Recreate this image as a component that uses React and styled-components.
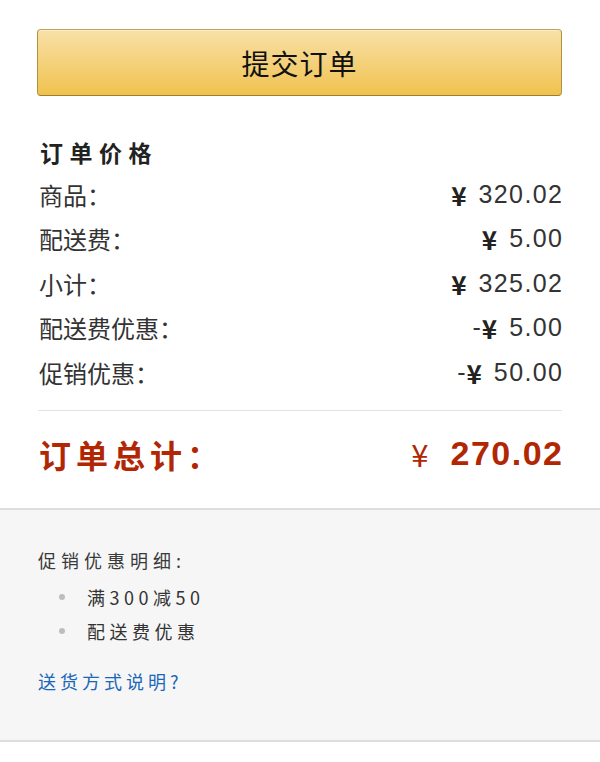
import React from "react";
import styled, { createGlobalStyle } from "styled-components";

const Global = createGlobalStyle`
  html, body { margin: 0; padding: 0; background: #fff; }
  body { width: 600px; font-family: "Noto Sans CJK SC", "Liberation Sans", sans-serif; }
  * { box-sizing: border-box; }
`;

const Page = styled.div`
  width: 600px;
  display: flex;
  flex-direction: column;
`;

const Summary = styled.section`
  padding: 29px 38px 29px 37px;
  display: flex;
  flex-direction: column;
`;

const SubmitButton = styled.button`
  height: 67px;
  width: 100%;
  display: flex;
  align-items: center;
  justify-content: center;
  border: 1px solid;
  border-color: #c2a258 #b0913f #9c7e31;
  border-radius: 4px;
  background: linear-gradient(to bottom, #f8e0a8, #f0c24e);
  box-shadow: inset 0 1px 0 rgba(255, 255, 255, 0.4);
  font-family: "Noto Sans CJK SC", sans-serif;
  font-size: 28px;
  letter-spacing: 1px;
  color: #111;
  padding: 0;
  cursor: pointer;
`;

const Heading = styled.h3`
  margin: 36px 0 0 3px;
  font-size: 23px;
  line-height: 40px;
  font-weight: 700;
  letter-spacing: 6.5px;
  color: #222;
`;

const Row = styled.div`
  display: flex;
  justify-content: space-between;
  align-items: center;
  height: 44.5px;
`;

const Label = styled.span`
  color: ${(p) => (p.$total ? "#b12704" : "#333")};
  font-size: ${(p) => (p.$total ? "32px" : "24px")};
  font-weight: ${(p) => (p.$total ? 700 : 400)};
  letter-spacing: ${(p) => (p.$total ? "5px" : "0")};
  margin-left: 2px;
`;

const Value = styled.span`
  display: flex;
  align-items: center;
  white-space: pre;
`;

const Minus = styled.span`
  font-family: "Liberation Sans", sans-serif;
  font-size: 25px;
  color: #333;
  margin-right: 1px;
`;

const Yen = styled.span`
  font-family: "Noto Sans CJK SC", sans-serif;
  font-size: ${(p) => (p.$total ? "31px" : "26px")};
  font-weight: ${(p) => (p.$total ? 400 : 700)};
  color: ${(p) => (p.$total ? "#b12704" : "#222")};
  margin-right: ${(p) => (p.$total ? "22px" : "12px")};
`;

const Amount = styled.span`
  font-family: "Liberation Sans", Arial, sans-serif;
  font-size: ${(p) => (p.$total ? "34px" : "25px")};
  font-weight: ${(p) => (p.$total ? 700 : 400)};
  letter-spacing: ${(p) => (p.$total ? "1.5px" : "1.4px")};
  margin-right: ${(p) => (p.$total ? "-1.5px" : "-1.4px")};
  color: ${(p) => (p.$total ? "#b12704" : "#333")};
`;

const Divider = styled.hr`
  margin: 15px 0 0 1px;
  border: 0;
  border-top: 1px solid #e3e3e3;
`;

const TotalRow = styled(Row)`
  height: 50px;
  margin-top: 18px;
`;

const Details = styled.section`
  border-top: 2px solid #dddddd;
  border-bottom: 2px solid #dddddd;
  background: #f6f6f6;
  padding: 35px 38px 44px 38px;
  display: flex;
  flex-direction: column;
`;

const DetailTitle = styled.div`
  font-size: 18px;
  line-height: 30px;
  letter-spacing: 5px;
  color: #3a3a3a;
`;

const List = styled.ul`
  margin: 5px 0 0;
  padding: 0;
  list-style: none;
`;

const Item = styled.li`
  display: flex;
  align-items: center;
  height: 34px;
  font-size: 18px;
  letter-spacing: 4.5px;
  color: #333;
  &::before {
    content: "";
    width: 6px;
    height: 6px;
    border-radius: 50%;
    background: #bdbdbd;
    margin: 0 22px 0 21px;
    flex: none;
  }
`;

const Link = styled.a`
  margin-top: 18px;
  font-size: 18px;
  line-height: 30px;
  letter-spacing: 4px;
  color: #1a66b8;
  text-decoration: none;
`;

const rows = [
  { label: "商品：", amount: "320.02" },
  { label: "配送费：", amount: "5.00" },
  { label: "小计：", amount: "325.02" },
  { label: "配送费优惠：", amount: "5.00", neg: true },
  { label: "促销优惠：", amount: "50.00", neg: true },
];

export default function App() {
  return (
    <Page>
      <Global />
      <Summary>
        <SubmitButton>提交订单</SubmitButton>
        <Heading>订单价格</Heading>
        {rows.map((r) => (
          <Row key={r.label}>
            <Label>{r.label}</Label>
            <Value>
              {r.neg && <Minus>-</Minus>}
              <Yen>¥</Yen>
              <Amount>{r.amount}</Amount>
            </Value>
          </Row>
        ))}
        <Divider />
        <TotalRow>
          <Label $total>订单总计：</Label>
          <Value>
            <Yen $total>¥</Yen>
            <Amount $total>270.02</Amount>
          </Value>
        </TotalRow>
      </Summary>
      <Details>
        <DetailTitle>促销优惠明细:</DetailTitle>
        <List>
          <Item>满300减50</Item>
          <Item>配送费优惠</Item>
        </List>
        <Link href="#">送货方式说明?</Link>
      </Details>
    </Page>
  );
}
